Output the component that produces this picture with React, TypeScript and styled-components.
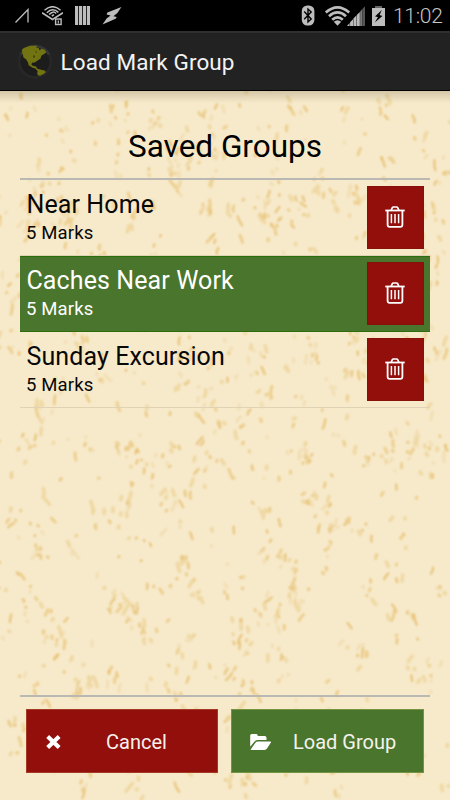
import React from 'react';
import styled, { createGlobalStyle } from 'styled-components';

const GlobalStyle = createGlobalStyle`
  * { box-sizing: border-box; }
  body { margin: 0; background: #f6e9ca; font-family: Roboto, "Liberation Sans", sans-serif; }
  button { font-family: inherit; }
`;

const Screen = styled.div`
  position: relative;
  width: 450px;
  height: 800px;
  overflow: hidden;
  display: flex;
  flex-direction: column;
`;

const StatusBar = styled.header`
  height: 31px;
  flex: none;
  background: #000;
  display: flex;
  justify-content: space-between;
  padding: 0 8px 0 15px;
`;

const StatusGroup = styled.div<{ $gap: number }>`
  display: flex;
  align-items: center;
  gap: ${(p) => p.$gap}px;
  svg { display: block; }
`;

const Clock = styled.time`
  color: #c6c6c6;
  font-size: 21px;
  line-height: 31px;
  font-weight: 300;
  width: 49px;
  margin-left: 3px;
  padding-top: 1px;
  letter-spacing: -0.3px;
  white-space: nowrap;
`;

const ActionBar = styled.div`
  height: 60px;
  flex: none;
  background: #222;
  border-top: 2px solid #303030;
  border-bottom: 1px solid #000;
  display: flex;
  align-items: center;
  gap: 8px;
  padding-left: 17px;
`;

const ActionTitle = styled.h1`
  margin: 0 0 0 -0.5px;
  color: #f3f3f3;
  font-size: 22.5px;
  font-weight: 400;
  line-height: 30px;
  letter-spacing: 0.1px;
`;

const Content = styled.main`
  position: relative;
  flex: 1;
  display: flex;
  flex-direction: column;
  padding: 0 20px 27px;
`;

const Paper = styled.svg`
  position: absolute;
  inset: 0;
`;

const TopShade = styled.div`
  position: absolute;
  inset: 0 0 auto;
  height: 12px;
  background: linear-gradient(rgba(70, 55, 25, 0.2), rgba(70, 55, 25, 0));
`;

const Heading = styled.h2`
  position: relative;
  margin: 0;
  height: 89px;
  padding-top: 35px;
  border-bottom: 2px solid #b9b8b2;
  text-align: center;
  color: #000;
  font-size: 31.5px;
  line-height: 42px;
  font-weight: 400;
`;

const List = styled.ul`
  position: relative;
  margin: 0;
  padding: 0;
  list-style: none;
  flex: 1;
`;

const Row = styled.li<{ $selected?: boolean }>`
  display: flex;
  justify-content: space-between;
  height: 76px;
  padding: 6px 6px 0 6.5px;
  background: ${(p) => (p.$selected ? '#4a752c' : 'transparent')};
  color: ${(p) => (p.$selected ? '#fff' : '#080808')};
  border: 1px solid ${(p) => (p.$selected ? '#2b6c0c' : 'transparent')};
  border-bottom-color: ${(p) => (p.$selected ? '#2b6c0c' : '#e0d3b5')};
  border-width: 1px 0;
`;

const Labels = styled.div`
  display: flex;
  flex-direction: column;
  padding-top: 1px;
`;

const Name = styled.span`
  font-size: 25px;
  line-height: 34px;
  letter-spacing: 0.1px;
  white-space: nowrap;
`;

const Count = styled.span`
  font-size: 18.5px;
  line-height: 23px;
  margin-left: -0.5px;
  letter-spacing: 0.15px;
`;

const DeleteButton = styled.button`
  width: 57px;
  height: 63px;
  padding: 0 1px 1px 0;
  margin-top: -1px;
  display: grid;
  place-items: center;
  background: #920f0c;
  border: 1px solid #86100a;
  color: #fff;
`;

const Footer = styled.footer`
  position: relative;
  height: 78px;
  border-top: 2px solid #b9b8b2;
  padding: 12px 6px 0;
  display: grid;
  grid-template-columns: 192px 193px;
  gap: 13px;
`;

const Action = styled.button<{ $tone: 'danger' | 'go' }>`
  height: 64px;
  border: 1px solid ${(p) => (p.$tone === 'go' ? '#739440' : '#a43a26')};
  background: ${(p) => (p.$tone === 'go' ? '#4a752c' : '#920f0c')};
  color: #fff;
  display: flex;
  align-items: center;
  padding: 2px 26px 0 18px;
  font-size: 20px;
`;

const ActionIcon = styled.span`
  width: 24px;
  display: grid;
  justify-items: start;
`;

const ActionLabel = styled.span<{ $offset: number }>`
  margin-left: ${(p) => p.$offset}px;
  line-height: 26px;
  white-space: nowrap;
  color: #f5f2ee;
`;

/* Speckled parchment: seeded flecks, mostly near vertical, gathered in loose clusters. */
const makeSpeckles = (width: number, height: number) => {
  let seed = 90210;
  const rnd = () => {
    seed = (seed + 0x6d2b79f5) | 0;
    let t = Math.imul(seed ^ (seed >>> 15), 1 | seed);
    t = (t + Math.imul(t ^ (t >>> 7), 61 | t)) ^ t;
    return ((t ^ (t >>> 14)) >>> 0) / 4294967296;
  };
  const layers = ['', '', '', ''];
  for (let i = 0; i < 640; i += 1) {
    const cx = rnd() * width;
    const cy = rnd() * height;
    const lean = (rnd() - 0.5) * 1.1;
    const n = 1 + Math.floor(rnd() * rnd() * 6);
    for (let j = 0; j < n; j += 1) {
      const x = cx + (rnd() - 0.5) * 15;
      const y = cy + (rnd() - 0.5) * 26;
      const len = 0.8 + rnd() * rnd() * 11;
      const angle = Math.PI / 2 + lean + (rnd() - 0.5) * 0.9;
      const dx = Math.cos(angle) * len;
      const dy = Math.sin(angle) * len;
      const layer = Math.floor(rnd() * 4);
      layers[layer] += `M${x.toFixed(1)} ${y.toFixed(1)}q${(dx / 2 + rnd() * 3 - 1.5).toFixed(1)} ${(dy / 2).toFixed(1)} ${dx.toFixed(1)} ${dy.toFixed(1)}`;
    }
  }
  return layers;
};

const speckles = makeSpeckles(450, 709);

const Parchment = () => (
  <Paper width="450" height="709" viewBox="0 0 450 709" aria-hidden="true">
    <defs>
      <filter id="soften" x="0" y="0" width="100%" height="100%">
        <feGaussianBlur stdDeviation="1.05" />
      </filter>
    </defs>
    <rect width="450" height="709" fill="#f7eacb" />
    <g filter="url(#soften)" fill="none" strokeLinecap="round">
      <path d={speckles[0]} stroke="#ebca84" strokeWidth="3" opacity="0.85" />
      <path d={speckles[1]} stroke="#ecd194" strokeWidth="3.6" opacity="0.75" />
      <path d={speckles[2]} stroke="#e6bf72" strokeWidth="2.4" opacity="0.85" />
      <path d={speckles[3]} stroke="#efd9a8" strokeWidth="3" opacity="0.7" />
    </g>
  </Paper>
);

const TrashIcon = () => (
  <svg width="20" height="22" viewBox="0 0 20 22" fill="none" stroke="currentColor">
    <path d="M0.3 4.5H19.7" strokeWidth="1.8" />
    <path d="M2.6 4.5V18.8Q2.6 20.9 4.7 20.9H15.3Q17.4 20.9 17.4 18.8V4.5" strokeWidth="1.8" />
    <path d="M6.2 4.2L7.2 1.8Q7.6 1 8.5 1H11.5Q12.4 1 12.8 1.8L13.8 4.2" strokeWidth="1.7" />
    <path d="M6.4 8V17.2M10 8V17.2M13.6 8V17.2" strokeWidth="1.5" />
  </svg>
);

const GlobeIcon = () => (
  <svg width="36" height="38" viewBox="0 0 36 38">
    <circle cx="18" cy="18.5" r="17.2" fill="#1c1c1c" />
    <circle cx="18" cy="18.5" r="16" fill="none" stroke="#272727" strokeWidth="3" />
    <path d="M4 11.5A16 16 0 0 1 32 11.5" fill="none" stroke="#363838" strokeWidth="2.5" />
    <path d="M5 6.5L7.3 4.8L13.3 2.8H20L19.4 5L21.7 4.8L22.4 7.2L24.6 5.8L27.7 6.8L29.3 9.5L26.7 11.2L24.3 12.8L23.6 15.4L21 17.2L17.7 19.5L15 19.8L14.4 21.6L15.7 22.8L19 23.5L20.4 25.8L22.3 26.2L28.3 27.8L28.6 29.4L27.3 30.5L23.3 32.8L20.7 32.2L20.2 30.2L20.7 28.2L18.4 25.6L15.7 24.8L11.7 22.2L11 19.6L9 16.2L6.4 14.6L6 12.2L5.2 9.6Z" fill="#717411" />
    <path d="M16 12.6h2v2h-2zM18.4 8.2h1.6v1.4h-1.6z" fill="#44470e" />
  </svg>
);

const LeftStatus = () => (
  <StatusGroup $gap={12}>
    <svg width="15" height="16" viewBox="0 0 15 16" fill="none" stroke="#bdbdbd" strokeWidth="1.3">
      <path d="M0.5 14.5L13 1.5V14.5" />
    </svg>
    <svg width="21" height="20" viewBox="0 0 21 20" fill="none" stroke="#bdbdbd">
      <path d="M0 6.7L10.5 13.5L21 6.7" strokeWidth="1.6" />
      <path d="M2.5 4.2Q10.5 -2.8 18.6 4.2" strokeWidth="1.5" />
      <path d="M4.8 6.8Q10.5 0.8 16.4 6.4" strokeWidth="1.5" />
      <path d="M7.2 8.6Q11 4.2 14.2 7.6M9.8 10L12 8.6" strokeWidth="1.5" />
      <rect x="13.6" y="13" width="5.5" height="5.5" fill="#000" strokeWidth="1.4" />
      <path d="M16.3 14.5V17.5" strokeWidth="1.2" />
    </svg>
    <svg width="15" height="19" viewBox="0 0 15 19" fill="#bdbdbd">
      <path d="M0 0H3.2V19H0ZM4 0H7.2V19H4ZM8 0H11.2V19H8ZM12 0H15V19H12Z" />
    </svg>
    <svg width="20" height="18" viewBox="0 0 20 18" fill="#bdbdbd">
      <path d="M19.4 0L5.4 5.4L4.6 7.4L8.6 8.6L4.6 11.4L0.5 17.5L13.6 11.8L14.8 10L11.4 9.2L15.4 6Z" />
    </svg>
  </StatusGroup>
);

const RightStatus = () => (
  <StatusGroup $gap={0}>
    <svg width="14" height="21" viewBox="0 0 14 21">
      <rect x="0.8" y="0.5" width="12.6" height="20" rx="5.5" fill="#bdbdbd" />
      <path d="M3.2 6.6L10.2 14L7 17V4L10.2 7L3.2 14.3" fill="none" stroke="#000" strokeWidth="1.4" />
    </svg>
    <svg width="75" height="22" viewBox="4 0 75 22">
      <g fill="none" stroke="#bdbdbd" strokeWidth="2.7">
        <path d="M14.8 7.5Q26.5 -2.8 38.2 7.5" />
        <path d="M18 11.2Q26.5 3.6 35 11.2" />
        <path d="M21.2 14.8Q26.5 10 31.8 14.8" />
      </g>
      <path d="M22.8 16.8Q26.5 13.6 30.2 16.8L26.5 20.8Z" fill="#bdbdbd" />
      <path d="M36 21L38.6 18V21ZM39.1 17.3L42 14.3V21H39.1ZM42.4 13.5L45.4 10.5V21H42.4ZM45.8 10L48.8 7V21H45.8Z" fill="#bdbdbd" />
      <path d="M49.1 6.5L51 4.5V21H49.1Z" fill="#777" />
      <path d="M51.2 4.2L54 1.2V21H51.2Z" fill="#555" />
      <path d="M61 3H64.5V1H70.5V3H74V21H61Z" fill="#bdbdbd" />
      <path d="M64.5 1H70.5V3H64.5Z" fill="#666" />
      <path d="M70.8 5L64 11.4L67 12.1L63.8 17.5L71.4 10.9L68.6 10Z" fill="#000" />
    </svg>
    <Clock>11:02</Clock>
  </StatusGroup>
);

const CrossIcon = () => (
  <svg width="16" height="14" viewBox="0 0 16 14" fill="none" stroke="currentColor" strokeWidth="4.2">
    <path d="M4.2 3L12.6 11M12.6 3L4.2 11" strokeLinecap="square" />
  </svg>
);

const FolderIcon = () => (
  <svg width="23" height="18" viewBox="0.8 0 23 18" fill="currentColor">
    <path d="M1 13.8V2.5Q1 1 2.5 1H7Q8.5 1 8.5 2.5V3H15.5Q17.3 3 17.3 4.8V7H8.8Q6.8 7 5.4 8.4Z" />
    <path d="M1.5 16.6L6.2 9.8Q7.1 8.5 8.8 8.5H21.2Q22.4 8.5 21.5 9.8L17.8 15.6Q17 17 15.3 17H2.2Q1.4 17 1.5 16.6Z" />
  </svg>
);

const groups = [
  { name: 'Near Home', marks: 5 },
  { name: 'Caches Near Work', marks: 5, selected: true },
  { name: 'Sunday Excursion', marks: 5 },
];

export default function App() {
  return (
    <Screen>
      <GlobalStyle />
      <StatusBar>
        <LeftStatus />
        <RightStatus />
      </StatusBar>
      <ActionBar>
        <GlobeIcon />
        <ActionTitle>Load Mark Group</ActionTitle>
      </ActionBar>
      <Content>
        <Parchment />
        <TopShade />
        <Heading>Saved Groups</Heading>
        <List>
          {groups.map((g) => (
            <Row key={g.name} $selected={g.selected}>
              <Labels>
                <Name>{g.name}</Name>
                <Count>{g.marks} Marks</Count>
              </Labels>
              <DeleteButton aria-label={`Delete ${g.name}`}>
                <TrashIcon />
              </DeleteButton>
            </Row>
          ))}
        </List>
        <Footer>
          <Action $tone="danger">
            <ActionIcon><CrossIcon /></ActionIcon>
            <ActionLabel $offset={37}>Cancel</ActionLabel>
          </Action>
          <Action $tone="go">
            <ActionIcon><FolderIcon /></ActionIcon>
            <ActionLabel $offset={19}>Load Group</ActionLabel>
          </Action>
        </Footer>
      </Content>
    </Screen>
  );
}
